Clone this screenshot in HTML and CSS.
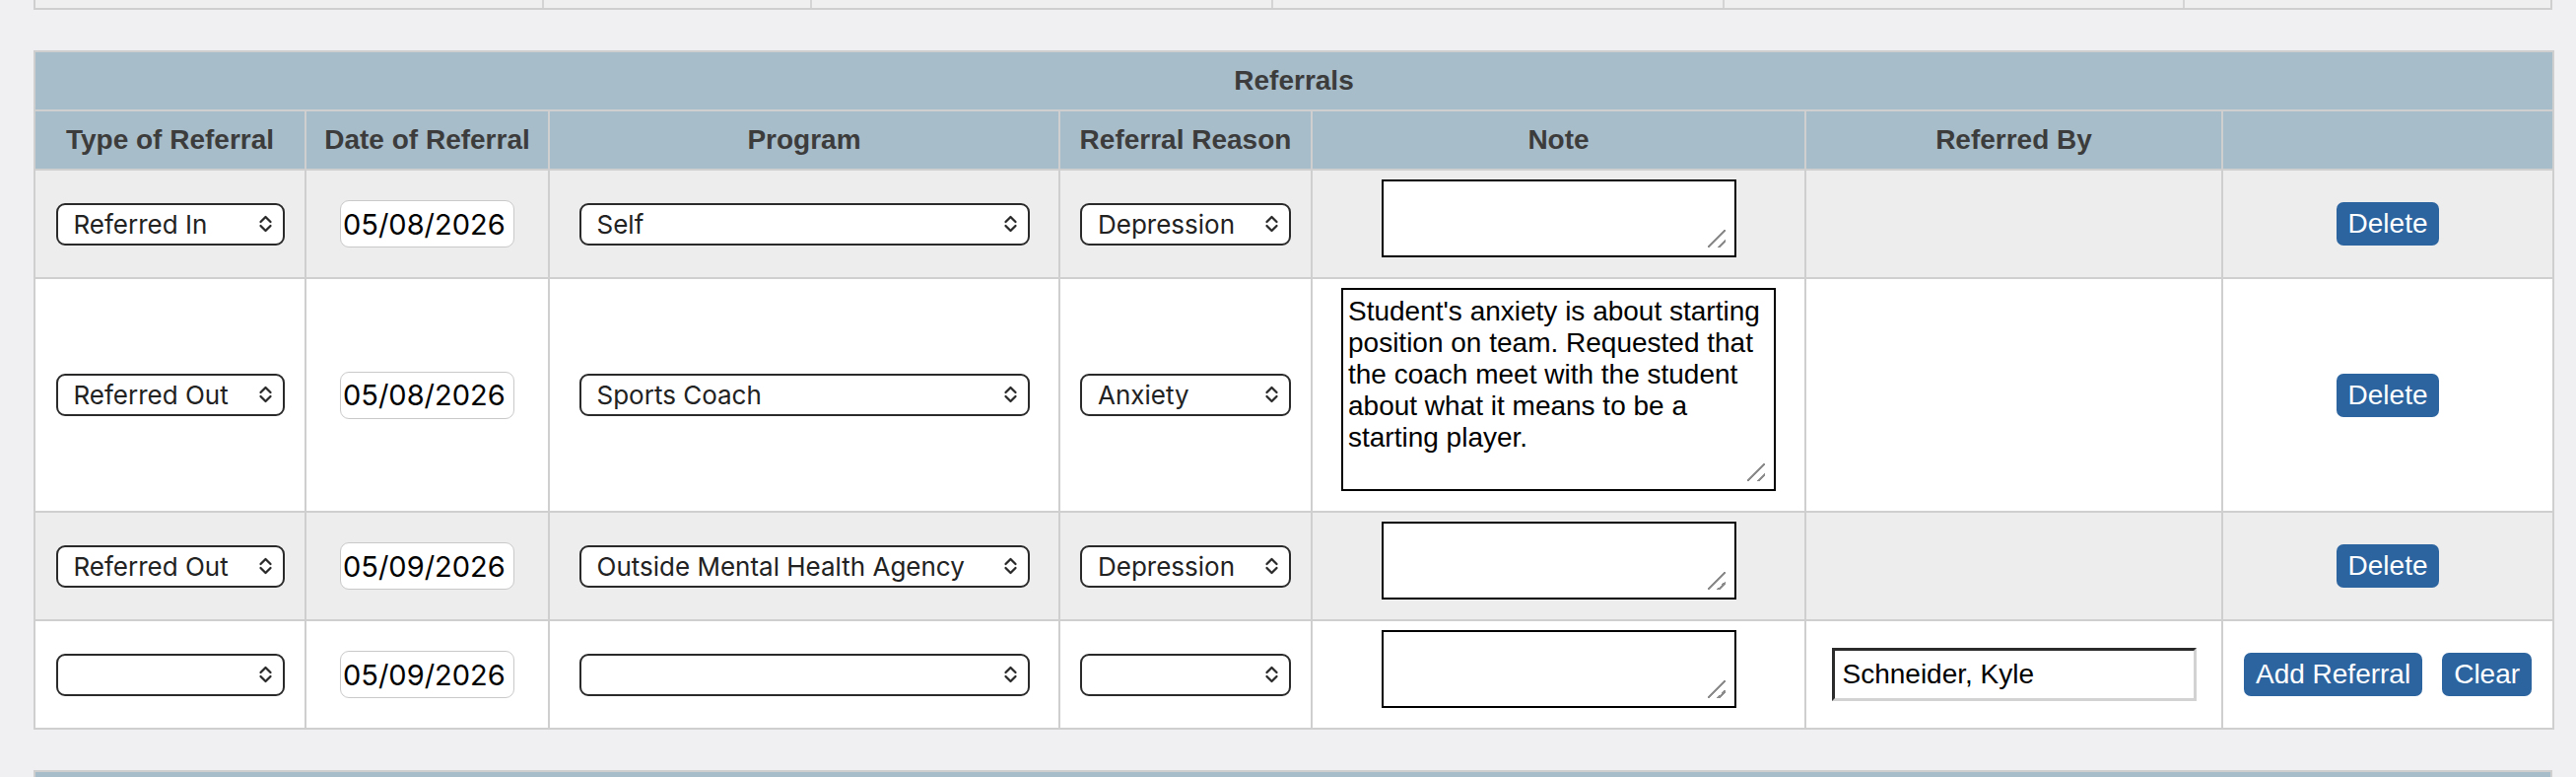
FILE: index.html
```html
<!DOCTYPE html>
<html lang="en">
<head>
  <meta charset="UTF-8">
  <meta name="viewport" content="width=device-width, initial-scale=1.0">
  <title>Referrals</title>
  <link rel="stylesheet" href="styles.css">
</head>
<body>
  <div id="page">
    <!-- tail end of the section above -->
    <div class="stub-table">
      <div class="stub-cell"></div>
      <div class="stub-cell"></div>
      <div class="stub-cell"></div>
      <div class="stub-cell"></div>
      <div class="stub-cell"></div>
      <div class="stub-cell"></div>
    </div>

    <table class="referrals">
      <colgroup>
        <col class="col-type">
        <col class="col-date">
        <col class="col-program">
        <col class="col-reason">
        <col class="col-note">
        <col class="col-by">
        <col class="col-actions">
      </colgroup>
      <thead>
        <tr><th colspan="7">Referrals</th></tr>
        <tr>
          <th>Type of Referral</th>
          <th>Date of Referral</th>
          <th>Program</th>
          <th>Referral Reason</th>
          <th>Note</th>
          <th>Referred By</th>
          <th></th>
        </tr>
      </thead>
      <tbody>
        <tr class="alt">
          <td>
            <span class="select-wrap">
              <select class="sel-type"><option>Referred In</option><option>Referred Out</option></select>
              <svg class="chevron" viewBox="0 0 15 20"><path d="M2.5 8 L7.5 3 L12.5 8 M2.5 12 L7.5 17 L12.5 12"/></svg>
            </span>
          </td>
          <td><input type="text" class="date" value="05/08/2026"></td>
          <td>
            <span class="select-wrap">
              <select class="sel-program"><option>Self</option><option>Sports Coach</option><option>Outside Mental Health Agency</option></select>
              <svg class="chevron" viewBox="0 0 15 20"><path d="M2.5 8 L7.5 3 L12.5 8 M2.5 12 L7.5 17 L12.5 12"/></svg>
            </span>
          </td>
          <td>
            <span class="select-wrap">
              <select class="sel-reason"><option>Depression</option><option>Anxiety</option></select>
              <svg class="chevron" viewBox="0 0 15 20"><path d="M2.5 8 L7.5 3 L12.5 8 M2.5 12 L7.5 17 L12.5 12"/></svg>
            </span>
          </td>
          <td><textarea class="note"></textarea></td>
          <td></td>
          <td><button class="btn">Delete</button></td>
        </tr>
        <tr>
          <td>
            <span class="select-wrap">
              <select class="sel-type"><option>Referred In</option><option selected>Referred Out</option></select>
              <svg class="chevron" viewBox="0 0 15 20"><path d="M2.5 8 L7.5 3 L12.5 8 M2.5 12 L7.5 17 L12.5 12"/></svg>
            </span>
          </td>
          <td><input type="text" class="date" value="05/08/2026"></td>
          <td>
            <span class="select-wrap">
              <select class="sel-program"><option>Self</option><option selected>Sports Coach</option><option>Outside Mental Health Agency</option></select>
              <svg class="chevron" viewBox="0 0 15 20"><path d="M2.5 8 L7.5 3 L12.5 8 M2.5 12 L7.5 17 L12.5 12"/></svg>
            </span>
          </td>
          <td>
            <span class="select-wrap">
              <select class="sel-reason"><option>Depression</option><option selected>Anxiety</option></select>
              <svg class="chevron" viewBox="0 0 15 20"><path d="M2.5 8 L7.5 3 L12.5 8 M2.5 12 L7.5 17 L12.5 12"/></svg>
            </span>
          </td>
          <td><textarea class="note note-tall">Student's anxiety is about starting position on team. Requested that the coach meet with the student about what it means to be a starting player.</textarea></td>
          <td></td>
          <td><button class="btn">Delete</button></td>
        </tr>
        <tr class="alt">
          <td>
            <span class="select-wrap">
              <select class="sel-type"><option>Referred In</option><option selected>Referred Out</option></select>
              <svg class="chevron" viewBox="0 0 15 20"><path d="M2.5 8 L7.5 3 L12.5 8 M2.5 12 L7.5 17 L12.5 12"/></svg>
            </span>
          </td>
          <td><input type="text" class="date" value="05/09/2026"></td>
          <td>
            <span class="select-wrap">
              <select class="sel-program"><option>Self</option><option>Sports Coach</option><option selected>Outside Mental Health Agency</option></select>
              <svg class="chevron" viewBox="0 0 15 20"><path d="M2.5 8 L7.5 3 L12.5 8 M2.5 12 L7.5 17 L12.5 12"/></svg>
            </span>
          </td>
          <td>
            <span class="select-wrap">
              <select class="sel-reason"><option selected>Depression</option><option>Anxiety</option></select>
              <svg class="chevron" viewBox="0 0 15 20"><path d="M2.5 8 L7.5 3 L12.5 8 M2.5 12 L7.5 17 L12.5 12"/></svg>
            </span>
          </td>
          <td><textarea class="note"></textarea></td>
          <td></td>
          <td><button class="btn">Delete</button></td>
        </tr>
        <tr>
          <td>
            <span class="select-wrap">
              <select class="sel-type"><option></option><option>Referred In</option><option>Referred Out</option></select>
              <svg class="chevron" viewBox="0 0 15 20"><path d="M2.5 8 L7.5 3 L12.5 8 M2.5 12 L7.5 17 L12.5 12"/></svg>
            </span>
          </td>
          <td><input type="text" class="date" value="05/09/2026"></td>
          <td>
            <span class="select-wrap">
              <select class="sel-program"><option></option><option>Self</option><option>Sports Coach</option><option>Outside Mental Health Agency</option></select>
              <svg class="chevron" viewBox="0 0 15 20"><path d="M2.5 8 L7.5 3 L12.5 8 M2.5 12 L7.5 17 L12.5 12"/></svg>
            </span>
          </td>
          <td>
            <span class="select-wrap">
              <select class="sel-reason"><option></option><option>Depression</option><option>Anxiety</option></select>
              <svg class="chevron" viewBox="0 0 15 20"><path d="M2.5 8 L7.5 3 L12.5 8 M2.5 12 L7.5 17 L12.5 12"/></svg>
            </span>
          </td>
          <td><textarea class="note"></textarea></td>
          <td><input type="text" class="referred-by" value="Schneider, Kyle"></td>
          <td>
            <div class="actions">
              <button class="btn">Add Referral</button>
              <button class="btn">Clear</button>
            </div>
          </td>
        </tr>
      </tbody>
    </table>

    <!-- start of the next section -->
    <div class="next-section"></div>
  </div>
</body>
</html>
```

FILE: styles.css
```css
body {
  margin: 0;
  background-color: #f0f0f2;
  font-family: "Liberation Sans", Arial, sans-serif;
  overflow: hidden;
}

#page {
  padding: 0 23px 0 34px;
}

.stub-table {
  display: grid;
  grid-template-columns: 516px 272px 468px 458px 467px 371px;
  box-sizing: border-box;
  width: 2556px;
  height: 10px;
  border: 2px solid #cfcfcf;
  border-top: none;
}

.stub-cell {
  background-color: #efefef;
  border-right: 2px solid #d4d4d4;
}

.stub-cell:last-child {
  border-right: none;
}

.referrals {
  margin-top: 41px;
  width: 2556px;
  table-layout: fixed;
  border-collapse: collapse;
}

.col-type { width: 275px; }
.col-date { width: 247px; }
.col-program { width: 518px; }
.col-reason { width: 256px; }
.col-note { width: 501px; }
.col-by { width: 423px; }
.col-actions { width: 336px; }

.referrals th,
.referrals td {
  border: 2px solid #cfcfcf;
  text-align: center;
  vertical-align: middle;
}

.referrals th {
  background-color: #a8bdca;
  color: #3c3c3c;
  font-size: 28px;
  line-height: 32px;
  font-weight: bold;
  padding: 13px 4px;
}

.referrals td {
  background-color: #ffffff;
  padding: 9px 10px;
}

.referrals tr.alt td {
  background-color: #ededed;
}

.select-wrap {
  position: relative;
  display: inline-block;
  vertical-align: middle;
}

select {
  -webkit-appearance: none;
  appearance: none;
  display: block;
  box-sizing: border-box;
  height: 43px;
  padding: 0 36px 0 16px;
  border: 2px solid #2a2a2a;
  border-radius: 9px;
  background-color: #ffffff;
  color: #222222;
  font-family: Inter, "Noto Sans", sans-serif;
  font-size: 26px;
}

.sel-type { width: 232px; }
.sel-program { width: 457px; }
.sel-reason { width: 214px; }

.chevron {
  position: absolute;
  right: 12px;
  top: 11px;
  width: 15px;
  height: 20px;
  fill: none;
  stroke: #2a2a2a;
  stroke-width: 2.3;
  stroke-linecap: round;
  stroke-linejoin: round;
  pointer-events: none;
}

.date {
  box-sizing: border-box;
  width: 177px;
  height: 48px;
  padding: 0 2px;
  border: 1px solid #c9c9c9;
  border-radius: 9px;
  background-color: #ffffff;
  color: #000000;
  font-family: Inter, "Noto Sans", sans-serif;
  font-size: 29px;
  vertical-align: middle;
}

.note {
  display: block;
  box-sizing: border-box;
  width: 360px;
  height: 79px;
  margin: 0 auto 11px;
  padding: 6px 5px;
  border: 2px solid #000000;
  background-color: #ffffff;
  background-image: linear-gradient(135deg, transparent 45%, #8c8c8c 45%, #8c8c8c 54%, transparent 54%, transparent 75%, #8c8c8c 75%, #8c8c8c 84%, transparent 84%);
  background-size: 18px 18px;
  background-position: right 9px bottom 8px;
  background-repeat: no-repeat;
  color: #000000;
  font-family: "Liberation Sans", Arial, sans-serif;
  font-size: 28px;
  line-height: 32px;
  resize: none;
}

.note-tall {
  width: 441px;
  height: 206px;
}

.referred-by {
  box-sizing: border-box;
  width: 370px;
  height: 54px;
  padding: 0 8px;
  border: 3px solid;
  border-color: #2b2b2b #d2d2d2 #d2d2d2 #2b2b2b;
  background-color: #ffffff;
  color: #000000;
  font-family: "Liberation Sans", Arial, sans-serif;
  font-size: 28px;
  vertical-align: middle;
}

.actions {
  display: flex;
  justify-content: center;
  gap: 20px;
}

.btn {
  background-color: #2c64a0;
  color: #ffffff;
  border: none;
  border-radius: 7px;
  padding: 6px 12px;
  font-family: "Liberation Sans", Arial, sans-serif;
  font-size: 28px;
  line-height: 32px;
  cursor: pointer;
}

.next-section {
  box-sizing: border-box;
  margin-top: 41px;
  width: 2556px;
  height: 40px;
  background-color: #a8bdca;
  border: 2px solid #cfcfcf;
}
```
